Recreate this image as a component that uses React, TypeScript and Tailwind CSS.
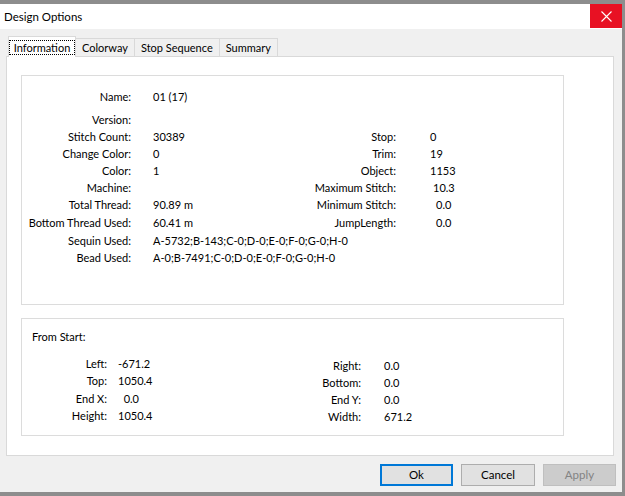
const font = { fontFamily: 'Lato, "Noto Sans", sans-serif' };

type Row = { label: string; value?: string; label2?: string; value2?: string; h: string };

const infoRows: Row[] = [
  { label: "Version:", h: "h-[17px]" },
  { label: "Stitch Count:", value: "30389", label2: "Stop:", value2: "0", h: "h-[17px]" },
  { label: "Change Color:", value: "0", label2: "Trim:", value2: "19", h: "h-[17px]" },
  { label: "Color:", value: "1", label2: "Object:", value2: "1153", h: "h-[17px]" },
  { label: "Machine:", label2: "Maximum Stitch:", value2: "10.3", h: "h-[17px]" },
  { label: "Total Thread:", value: "90.89 m", label2: "Minimum Stitch:", value2: "0.0", h: "h-[17px]" },
  { label: "Bottom Thread Used:", value: "60.41 m", label2: "JumpLength:", value2: "0.0", h: "h-[18px]" },
  { label: "Sequin Used:", value: "A-5732;B-143;C-0;D-0;E-0;F-0;G-0;H-0", h: "h-[18px]" },
  { label: "Bead Used:", value: "A-0;B-7491;C-0;D-0;E-0;F-0;G-0;H-0", h: "h-[17px]" },
];

const startLeft = [
  ["Left:", "-671.2"],
  ["Top:", "1050.4"],
  ["End X:", "\u00a0\u00a00.0"],
  ["Height:", "1050.4"],
];

const startRight = [
  ["Right:", "0.0"],
  ["Bottom:", "0.0"],
  ["End Y:", "0.0"],
  ["Width:", "671.2"],
];

function InfoRow({ row }: { row: Row }) {
  const shift =
    row.value2 === "10.3" ? "pl-[37px]" : row.value2 === "0.0" ? "pl-[40px]" : "pl-[34px]";
  return (
    <div className={`flex items-center whitespace-nowrap ${row.h}`}>
      <div className="w-[109px] shrink-0 text-right">{row.label}</div>
      <div className="w-[143px] shrink-0 pl-[22px]">{row.value}</div>
      {row.label2 !== undefined && (
        <>
          <div className="w-[122px] shrink-0 text-right">{row.label2}</div>
          <div className={shift}>{row.value2}</div>
        </>
      )}
    </div>
  );
}

function Tab({ label, active }: { label: string; active?: boolean }) {
  if (active) {
    return (
      <div className="relative z-10 -mb-px flex h-[21px] w-[68px] items-center justify-center border border-b-0 border-[#d9d9d9] bg-white">
        <span className="border border-dotted border-black px-[4px] leading-[13px]">{label}</span>
      </div>
    );
  }
  return (
    <div className="mt-[2px] flex h-[18px] items-center border border-l-0 border-b-0 border-[#d9d9d9] bg-[#f0f0f0] px-[6px] pt-px">
      {label}
    </div>
  );
}

export default function App() {
  return (
    <div className="h-[496px] w-[625px] bg-[#8d8d8d] pt-[4px] text-[11px] text-black" style={font}>
      <div className="flex h-[488px] w-[622px] flex-col bg-[#f0f0f0]">
        {/* title bar */}
        <div className="flex h-[25px] items-center justify-between bg-white">
          <span className="pl-[4px] text-[11.5px]">Design Options</span>
          <div className="flex h-[24px] w-[32px] items-center justify-center self-start bg-[#e81123]">
            <svg width="11" height="11" viewBox="0 0 11 11" stroke="white" strokeWidth="1.1">
              <path d="M0.5 0.5 L10.5 10.5 M10.5 0.5 L0.5 10.5" />
            </svg>
          </div>
        </div>

        {/* tabs */}
        <div className="flex pl-[8px] pt-[7px]">
          <Tab label="Information" active />
          <Tab label="Colorway" />
          <Tab label="Stop Sequence" />
          <Tab label="Summary" />
        </div>

        <div className="ml-[6px] flex h-[400px] w-[608px] flex-col border border-[#d9d9d9] bg-white pl-[14px] pt-[18px]">
          {/* design information */}
          <div className="h-[230px] w-[543px] border border-[#dcdcdc] pt-[13px]">
            <div className="flex h-[17px] items-center">
              <div className="w-[109px] text-right">Name:</div>
              <div className="pl-[22px]">01 (17)</div>
            </div>
            <div className="mt-[6px]">
              {infoRows.map((r) => (
                <InfoRow key={r.label} row={r} />
              ))}
            </div>
          </div>

          {/* extents from start */}
          <div className="mt-[13px] h-[118px] w-[543px] border border-[#dcdcdc]">
            <div className="pl-[10px] pt-[9px] leading-[17px]">From Start:</div>
            <div className="mt-[10px] flex">
              <div className="w-[255px]">
                {startLeft.map(([l, v]) => (
                  <div key={l} className="flex h-[17.5px] items-center whitespace-nowrap">
                    <div className="w-[85px] text-right">{l}</div>
                    <div className="pl-[11px]">{v}</div>
                  </div>
                ))}
              </div>
              <div className="mt-[3px]">
                {startRight.map(([l, v]) => (
                  <div key={l} className="flex h-[17px] items-center whitespace-nowrap">
                    <div className="w-[84px] text-right">{l}</div>
                    <div className="pl-[23px]">{v}</div>
                  </div>
                ))}
              </div>
            </div>
          </div>
        </div>

        {/* dialog buttons */}
        <div className="mt-[8px] flex gap-[8px] pl-[380px]">
          <button className="h-[22px] w-[73px] border-2 border-[#0078d7] bg-[#e1e1e1] text-[11.5px]">Ok</button>
          <button className="h-[22px] w-[74px] border border-[#adadad] bg-[#e1e1e1] text-[11.5px]">Cancel</button>
          <button className="h-[22px] w-[73px] border border-[#bfbfbf] bg-[#cccccc] text-[11.5px] text-[#838383]">Apply</button>
        </div>
      </div>
    </div>
  );
}
